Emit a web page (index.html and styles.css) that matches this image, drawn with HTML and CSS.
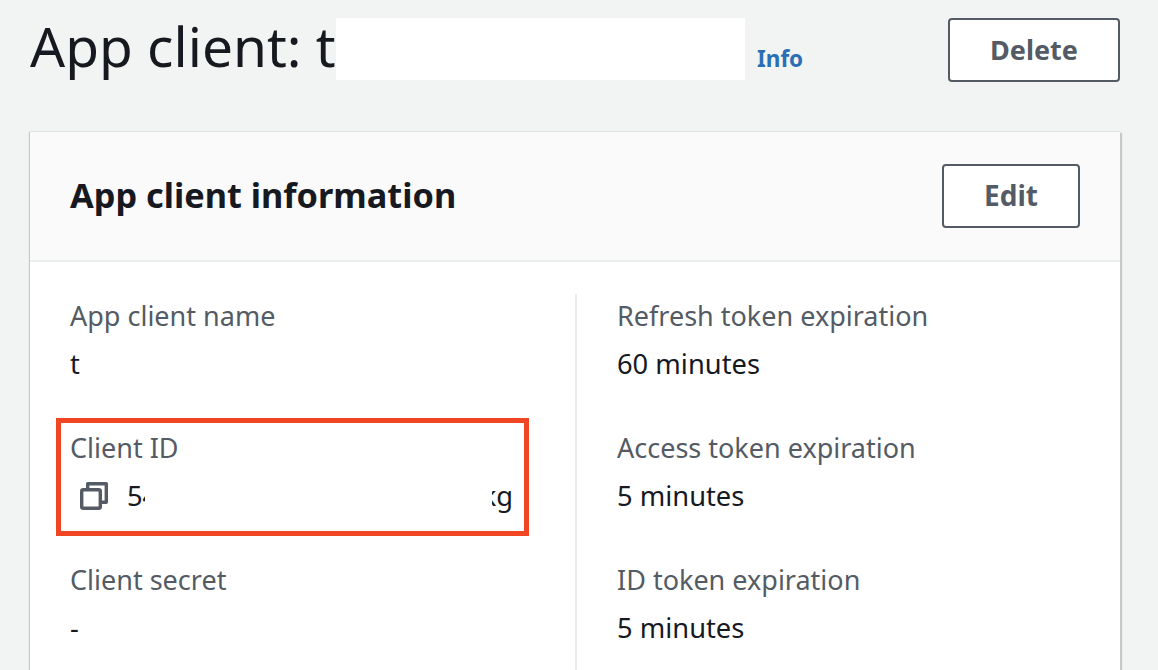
FILE: index.html
```html
<!DOCTYPE html>
<html lang="en">
<head>
    <meta charset="UTF-8">
    <title>App client</title>
    <link rel="stylesheet" href="styles.css">
</head>

<body>

<div class="page-header">
    <h1 class="page-title">App client: t</h1>
    <div class="redacted-name"></div>
    <a class="info-link" href="#">Info</a>
    <button class="btn btn-delete" type="button">Delete</button>
</div>

<div class="panel">
    <div class="panel-header">
        <h2>App client information</h2>
        <button class="btn btn-edit" type="button">Edit</button>
    </div>

    <div class="panel-body">
        <div class="column column-left">
            <div class="field">
                <div class="field-label">App client name</div>
                <div class="field-value">t</div>
            </div>

            <div class="field">
                <div class="field-label">Client ID</div>
                <div class="field-value id-value">
                    <svg class="copy-icon" width="28" height="28" viewBox="0 0 28 28" fill="none" stroke="#545b64" stroke-width="3.4" stroke-linejoin="round">
                        <path d="M7.7 6V1.7H26.3V20.3H21.5"/>
                        <rect x="1.7" y="7.7" width="18.6" height="18.6" rx="1.5"/>
                    </svg>
                    <span>54</span>
                    <span class="id-end">kg</span>
                    <span class="redacted-id"></span>
                </div>
                <!-- red marker drawn on top of the screenshot -->
                <div class="highlight"></div>
            </div>

            <div class="field">
                <div class="field-label">Client secret</div>
                <div class="field-value">-</div>
            </div>
        </div>

        <div class="column column-right">
            <div class="field">
                <div class="field-label">Refresh token expiration</div>
                <div class="field-value">60 minutes</div>
            </div>

            <div class="field">
                <div class="field-label">Access token expiration</div>
                <div class="field-value">5 minutes</div>
            </div>

            <div class="field">
                <div class="field-label">ID token expiration</div>
                <div class="field-value">5 minutes</div>
            </div>
        </div>
    </div>
</div>

</body>
</html>
```

FILE: styles.css
```css
html, body {
    height: 100%;
}
body {
    font-family: "Noto Sans", "Open Sans", sans-serif;
    background: #f2f3f3;
    color: #16191f;
    margin: 0;
    padding: 0;
    overflow: hidden;
}
.page-header {
    display: flex;
    align-items: flex-start;
    height: 132px;
    box-sizing: border-box;
    padding: 18px 38px 0 30px;
}
.page-title {
    margin: 0;
    font-size: 55px;
    font-weight: 400;
    line-height: 56px;
    white-space: nowrap;
    width: 306px;
}
.redacted-name {
    position: relative;
    width: 409px;
    height: 62px;
    background: #fff;
}
.info-link {
    margin: 27px 0 0 12px;
    color: #2a6fb5;
    font-size: 22.5px;
    font-weight: 700;
    line-height: 28px;
    text-decoration: none;
}
.btn {
    box-sizing: border-box;
    background: #fff;
    border: 2px solid #545b64;
    border-radius: 4px;
    color: #545b64;
    font-family: inherit;
    font-size: 27px;
    font-weight: 700;
    padding: 0 0 2px;
    height: 64px;
}
.btn-delete {
    width: 172px;
    margin-left: auto;
}
.btn-edit {
    width: 138px;
    font-size: 28px;
}
.panel {
    margin-left: 30px;
    width: 1090px;
    height: 560px;
    background: #fff;
    box-shadow: -1px 0 1px #c6c8ca, 2px 1px 1px #c6c8ca, 0 -1px 1px #e6e7e8;
}
.panel-header {
    display: flex;
    align-items: center;
    justify-content: space-between;
    box-sizing: border-box;
    height: 130px;
    padding: 0 40px;
    background: #fafafa;
    border-bottom: 2px solid #eaeded;
}
.panel-header h2 {
    margin: 0 0 4px;
    font-size: 34.3px;
    font-weight: 700;
}
.panel-body {
    display: grid;
    grid-template-columns: 547px 1fr;
    padding-top: 32px;
}
.column-left {
    padding-left: 40px;
    border-right: 2px solid #eaeded;
}
.column-right {
    padding-left: 40px;
}
.field {
    position: relative;
    height: 132px;
}
.field-label {
    color: #545b64;
    font-size: 27px;
    line-height: 44px;
    white-space: nowrap;
}
.field-value {
    font-size: 27.3px;
    line-height: 48px;
    margin-top: 2px;
}
.id-value {
    position: relative;
    display: flex;
    align-items: center;
    padding-left: 10px;
    padding-right: 62px;
}
.copy-icon {
    flex: none;
    margin-right: 19px;
}
.id-end {
    margin-left: auto;
}
.redacted-id {
    position: absolute;
    left: 75px;
    width: 347px;
    top: 0;
    bottom: 0;
    background: #fff;
}
.highlight {
    position: absolute;
    left: -14px;
    top: -8px;
    width: 473px;
    height: 118px;
    box-sizing: border-box;
    border: 5px solid #f04624;
}
```
